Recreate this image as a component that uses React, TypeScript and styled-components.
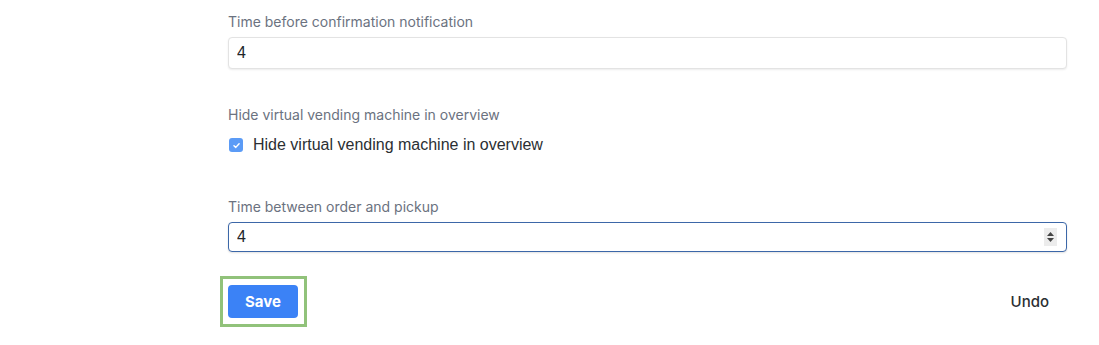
import React from "react";
import styled, { createGlobalStyle } from "styled-components";

const Global = createGlobalStyle`
  html, body { margin: 0; padding: 0; background: #ffffff; }
  body { font-family: Inter, "Noto Sans", "Liberation Sans", sans-serif; -webkit-font-smoothing: antialiased; }
  * { box-sizing: border-box; }
`;

const Page = styled.div`
  width: 1099px;
  height: 345px;
  padding: 14px 0 0 228px;
  overflow: hidden;
`;

const Form = styled.div`
  width: 839px;
  display: flex;
  flex-direction: column;
`;

const Group = styled.div<{ $mb: number }>`
  display: flex;
  flex-direction: column;
  margin-bottom: ${(p) => p.$mb}px;
`;

const Label = styled.div`
  font-size: 14px;
  line-height: 16px;
  color: #6b7280;
  margin-bottom: 7px;
`;

const InputWrap = styled.div`
  position: relative;
`;

const Input = styled.input<{ $focused?: boolean; $h: number }>`
  display: block;
  width: 100%;
  height: ${(p) => p.$h}px;
  padding: 0 8px;
  font-family: "Liberation Sans", Arial, sans-serif;
  font-size: 16px;
  color: #212529;
  background: #fff;
  border: 1px solid ${(p) => (p.$focused ? "#3c67a8" : "#e3e3e3")};
  border-radius: 4px;
  box-shadow: ${(p) => (p.$focused ? "0 1px 2px rgba(0,0,0,0.12)" : "0 1px 2px rgba(0,0,0,0.08)")};
  outline: none;
`;

const Spinner = styled.div`
  position: absolute;
  right: 10px;
  top: 6px;
  width: 13px;
  height: 18px;
  background: #ececec;
  display: flex;
  align-items: center;
  justify-content: center;
`;

const CheckRow = styled.label`
  display: flex;
  align-items: center;
  gap: 10px;
  height: 20px;
  margin-top: 5px;
  font-family: "Liberation Sans", Arial, sans-serif;
  font-size: 16px;
  color: #2b2f33;
`;

const Box = styled.span`
  width: 14px;
  height: 14px;
  margin-left: 1px;
  border-radius: 3px;
  background: #5b9bf6;
  display: flex;
  align-items: center;
  justify-content: center;
`;

const Actions = styled.div`
  display: flex;
  align-items: center;
  justify-content: space-between;
  margin-left: -8px;
`;

const Highlight = styled.div`
  border: 3px solid #91c27a;
  padding: 6px 6px 6px 5px;
  display: flex;
`;

const SaveButton = styled.button`
  width: 70px;
  height: 33px;
  border: none;
  border-radius: 4px;
  background: #3b82f6;
  color: #fff;
  font-family: inherit;
  font-size: 15px;
  font-weight: 700;
`;

const UndoButton = styled.button`
  border: none;
  background: transparent;
  font-family: inherit;
  font-size: 15px;
  font-weight: 500;
  color: #2b2f33;
  padding: 0 18px 0 0;
`;

export default function App() {
  return (
    <>
      <Global />
      <Page>
        <Form>
          <Group $mb={38}>
            <Label>Time before confirmation notification</Label>
            <Input $h={32} defaultValue="4" readOnly />
          </Group>
          <Group $mb={44}>
            <Label>Hide virtual vending machine in overview</Label>
            <CheckRow>
              <Box>
                <svg width="9" height="9" viewBox="0 0 10 10">
                  <path d="M2.2 5.2 L4.2 7.1 L7.9 3" fill="none" stroke="#fff" strokeWidth="1.6" strokeLinecap="round" strokeLinejoin="round" />
                </svg>
              </Box>
              Hide virtual vending machine in overview
            </CheckRow>
          </Group>
          <Group $mb={24}>
            <Label>Time between order and pickup</Label>
            <InputWrap>
              <Input $h={30} $focused defaultValue="4" readOnly />
              <Spinner>
                <svg width="9" height="12" viewBox="0 0 9 12">
                  <path d="M4.5 1 L8 5 L1 5 Z" fill="#444" />
                  <path d="M4.5 11 L8 7 L1 7 Z" fill="#444" />
                </svg>
              </Spinner>
            </InputWrap>
          </Group>
          <Actions>
            <Highlight>
              <SaveButton>Save</SaveButton>
            </Highlight>
            <UndoButton>Undo</UndoButton>
          </Actions>
        </Form>
      </Page>
    </>
  );
}
